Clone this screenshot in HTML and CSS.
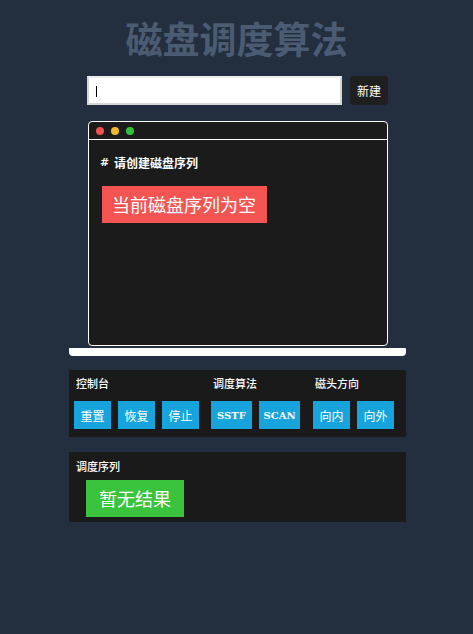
FILE: index.html
```html
<!DOCTYPE html>
<html lang="zh">
<head>
<meta charset="utf-8">
<title>磁盘调度算法</title>
<link rel="stylesheet" href="styles.css">
</head>
<body>
<h1 class="title">磁盘调度算法</h1>
<div class="app">
  <div class="create-row">
    <div class="input-wrap">
      <input class="seq-input" type="text">
      <span class="caret"></span>
    </div>
    <button class="new-btn">新建</button>
  </div>

  <div class="laptop">
    <div class="screen">
      <div class="titlebar">
        <span class="dot red"></span>
        <span class="dot yellow"></span>
        <span class="dot green"></span>
      </div>
      <div class="screen-body">
        <div class="prompt"><span class="hash">#</span>请创建磁盘序列</div>
        <div class="empty-box">当前磁盘序列为空</div>
      </div>
    </div>
    <div class="base"></div>
  </div>

  <div class="panel controls">
    <div class="group">
      <div class="label">控制台</div>
      <div class="btns">
        <button class="btn">重置</button>
        <button class="btn">恢复</button>
        <button class="btn">停止</button>
      </div>
    </div>
    <div class="group">
      <div class="label">调度算法</div>
      <div class="btns">
        <button class="btn latin">SSTF</button>
        <button class="btn latin">SCAN</button>
      </div>
    </div>
    <div class="group dir">
      <div class="label">磁头方向</div>
      <div class="btns">
        <button class="btn">向内</button>
        <button class="btn">向外</button>
      </div>
    </div>
  </div>

  <div class="panel result">
    <div class="label">调度序列</div>
    <div class="result-box">暂无结果</div>
  </div>
</div>
</body>
</html>
```
FILE: styles.css
```css
* { box-sizing: border-box; }
html, body {
  margin: 0;
  padding: 0;
  background: #232e3e;
  height: 100%;
}
body {
  font-family: "Noto Sans CJK SC", "Noto Sans", sans-serif;
  color: #fff;
}
.title {
  margin: 0;
  padding-top: 17px;
  text-align: center;
  font-size: 37px;
  line-height: 43px;
  font-weight: 700;
  color: #4b5b72;
}
.app {
  width: 337px;
  margin: 0 67px 0 69px;
}
.create-row {
  display: flex;
  margin-top: 16px;
  margin-left: 18px;
  gap: 8px;
}
.input-wrap {
  position: relative;
  width: 255px;
  height: 29px;
}
.seq-input {
  width: 100%;
  height: 100%;
  margin: 0;
  border: 2px solid #d6d6d6;
  border-top-color: #ececec;
  background: #fff;
  outline: none;
  padding: 0 8px;
}
.caret {
  position: absolute;
  left: 9px;
  top: 10px;
  width: 1px;
  height: 11px;
  background: #000;
}
.new-btn {
  width: 38px;
  height: 29px;
  border: none;
  border-radius: 4px;
  background: #1f1f1f;
  color: #fff;
  font-family: inherit;
  font-size: 12px;
  padding: 0;
}
.laptop {
  margin-top: 16px;
}
.screen {
  width: 300px;
  height: 225px;
  margin-left: 19px;
  border: 1px solid #fff;
  border-radius: 4px;
  background: #1b1b1b;
}
.titlebar {
  height: 18px;
  border-bottom: 1px solid #fff;
  display: flex;
  align-items: center;
  padding-left: 7px;
  gap: 7px;
}
.dot {
  width: 8px;
  height: 8px;
  border-radius: 50%;
}
.dot.red { background: #f05252; }
.dot.yellow { background: #f3b72b; }
.dot.green { background: #2fc23a; }
.screen-body {
  padding: 14px 0 0 11px;
}
.prompt {
  display: flex;
  align-items: center;
  height: 17px;
  font-size: 12px;
  line-height: 17px;
  font-weight: 700;
}
.hash {
  width: 14px;
  font-family: "DejaVu Sans", sans-serif;
  font-size: 11px;
  line-height: 17px;
}
.empty-box {
  display: inline-block;
  margin: 15px 0 0 2px;
  height: 37px;
  line-height: 37px;
  padding: 0 11px 0 10px;
  font-size: 18px;
  background: #f45552;
  color: #fff;
}
.base {
  margin-top: 2px;
  height: 8px;
  background: #fff;
  border-radius: 0 1px 4px 4px;
}
.panel {
  background: #1a1a1a;
}
.controls {
  margin-top: 14px;
  height: 67px;
  padding: 6px 5px 0 5px;
  display: flex;
  gap: 12px;
}
.group.dir {
  margin-left: 1px;
}
.label {
  font-size: 11px;
  line-height: 15px;
  font-weight: 500;
  padding-left: 2px;
}
.btns {
  display: flex;
  gap: 7px;
  margin-top: 10px;
}
.btn {
  height: 28px;
  border: none;
  background: #17a4dc;
  color: #fff;
  font-family: inherit;
  font-size: 12px;
  width: 37px;
  padding: 0;
}
.btn.latin {
  font-family: "DejaVu Serif", "Liberation Serif", serif;
  font-weight: 700;
  font-size: 10px;
  width: 41px;
}
.result {
  margin-top: 15px;
  height: 70px;
  padding: 7px 0 0 5px;
}
.result-box {
  display: inline-block;
  margin: 6px 0 0 12px;
  height: 37px;
  line-height: 37px;
  padding: 0 13px 0 13px;
  font-size: 18px;
  background: #3ac43e;
  color: #fff;
}
```
